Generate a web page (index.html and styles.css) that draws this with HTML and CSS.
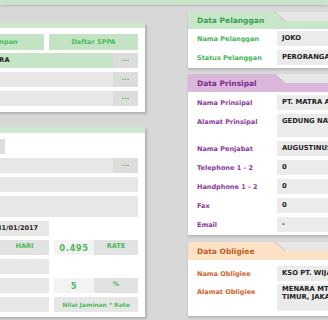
FILE: index.html
```html
<!DOCTYPE html>
<html lang="id">
<head>
    <meta charset="UTF-8">
    <meta name="viewport" content="width=device-width, initial-scale=1.0">
    <title>Data SPPA</title>
    <link rel="stylesheet" href="styles.css">
</head>
<body>
    <div class="topbar"></div>

    <div class="page">
        <div class="col-left">
            <section class="panel panel-top">
                <div class="panel-strip"></div>
                <div class="panel-body">
                    <div class="actions">
                        <button class="btn btn-save">Simpan</button>
                        <button class="btn">Daftar SPPA</button>
                    </div>
                    <div class="frow">
                        <span class="flabel">Prinsipal</span>
                        <div class="field">
                            <span class="input input-hl">PT. MATRA</span>
                            <span class="more">...</span>
                        </div>
                    </div>
                    <div class="frow">
                        <span class="flabel">Obligee</span>
                        <div class="field">
                            <span class="input"></span>
                            <span class="more">...</span>
                        </div>
                    </div>
                    <div class="frow">
                        <span class="flabel">Proyek</span>
                        <div class="field">
                            <span class="input"></span>
                            <span class="more">...</span>
                        </div>
                    </div>
                </div>
            </section>

            <section class="panel panel-main">
                <div class="panel-strip"></div>
                <div class="panel-body">
                    <div class="frow">
                        <span class="flabel">Jenis</span>
                        <div class="field">
                            <span class="select"></span>
                        </div>
                    </div>
                    <div class="frow">
                        <span class="flabel">Proyek</span>
                        <div class="field">
                            <span class="input"></span>
                            <span class="more">...</span>
                        </div>
                    </div>
                    <div class="frow">
                        <span class="flabel">No. Kontrak</span>
                        <div class="field">
                            <span class="input"></span>
                        </div>
                    </div>
                    <div class="frow">
                        <span class="flabel">Keterangan</span>
                        <div class="field">
                            <span class="input input-area"></span>
                        </div>
                    </div>
                    <div class="frow">
                        <span class="flabel">Periode</span>
                        <div class="field">
                            <span class="input w-a date">31/01/2017</span>
                        </div>
                    </div>
                    <div class="frow">
                        <span class="flabel">Jangka</span>
                        <div class="field">
                            <span class="input w-days"></span>
                            <span class="tag w-unit">HARI</span>
                            <span class="num w-b">0.495</span>
                            <span class="tag w-c">RATE</span>
                        </div>
                    </div>
                    <div class="frow">
                        <span class="flabel">Nilai Proyek</span>
                        <div class="field">
                            <span class="input w-a"></span>
                        </div>
                    </div>
                    <div class="frow">
                        <span class="flabel">Nilai Jaminan</span>
                        <div class="field">
                            <span class="input w-a"></span>
                            <span class="num w-b">5</span>
                            <span class="tag w-c">%</span>
                        </div>
                    </div>
                    <div class="frow">
                        <span class="flabel">Premi</span>
                        <div class="field">
                            <span class="input w-a"></span>
                            <span class="tag tag-small w-bc">Nilai Jaminan * Rate</span>
                        </div>
                    </div>
                </div>
            </section>
        </div>

        <div class="col-right">
            <section class="card card-green card-pelanggan">
                <div class="card-head"><span class="card-tab">Data Pelanggan</span></div>
                <div class="card-body">
                    <span class="label">Nama Pelanggan</span>
                    <span class="value">JOKO</span>
                    <span class="label">Status Pelanggan</span>
                    <span class="value">PERORANGAN</span>
                </div>
            </section>

            <section class="card card-purple">
                <div class="card-head"><span class="card-tab">Data Prinsipal</span></div>
                <div class="card-body">
                    <span class="label">Nama Prinsipal</span>
                    <span class="value">PT. MATRA ANUGERAH</span>
                    <span class="label label-top">Alamat Prinsipal</span>
                    <span class="value value-area">GEDUNG NAYAKA</span>
                    <span class="label">Nama Penjabat</span>
                    <span class="value">AUGUSTINUS</span>
                    <span class="label">Telephone 1 - 2</span>
                    <span class="value">0</span>
                    <span class="label">Handphone 1 - 2</span>
                    <span class="value">0</span>
                    <span class="label">Fax</span>
                    <span class="value">0</span>
                    <span class="label">Email</span>
                    <span class="value">-</span>
                </div>
            </section>

            <section class="card card-orange">
                <div class="card-head"><span class="card-tab">Data Obligiee</span></div>
                <div class="card-body">
                    <span class="label">Nama Obligiee</span>
                    <span class="value">KSO PT. WIJAYA</span>
                    <span class="label label-top">Alamat Obligiee</span>
                    <span class="value value-wrap">MENARA MTH JL. MT HARYONO<br>TIMUR, JAKARTA</span>
                </div>
            </section>
        </div>
    </div>
</body>
</html>
```

FILE: styles.css
```css
:root {
    --bg: #d8d8d8;
    --green-light: #c8e5c9;
    --green-btn: #c3e3c4;
    --green-text: #4cbb5b;
    --grey-input: #e8e7e5;
    --grey-btn: #dcdcdc;
    --value-bg: #ebebeb;
}

body {
    margin: 0;
    background: var(--bg);
    font-family: 'DejaVu Sans', Verdana, sans-serif;
    font-weight: bold;
    font-size: 6.5px;
    overflow: hidden;
    width: 328px;
    height: 320px;
}

.topbar {
    height: 5px;
    background: var(--green-light);
    box-shadow: 0 1px 2px rgba(0,0,0,0.15);
}

.page {
    display: flex;
    gap: 43px;
}

/* left column (cut off by the window) */
.col-left {
    flex: none;
    width: 245px;
    margin-left: -100px;
    margin-top: 18px;
}

.panel {
    background: #fff;
    box-shadow: 2px 2px 2px rgba(0,0,0,0.18);
}

.panel-top {
    margin-bottom: 15px;
}

.panel-strip {
    height: 5px;
    background: #cfe8d0;
}

.panel-main .panel-strip {
    height: 6px;
}

.panel-body {
    padding: 6px 7px;
    display: flex;
    flex-direction: column;
    gap: 4px;
}

.panel-main .panel-body {
    padding-bottom: 5px;
}

.actions {
    display: flex;
    justify-content: flex-end;
    gap: 5px;
    margin-bottom: -1px;
}

.btn {
    flex: 0 0 89px;
    height: 16px;
    border: none;
    padding: 0;
    background: var(--green-btn);
    color: var(--green-text);
    font: inherit;
}

.btn-save {
    flex-basis: 80px;
}

.frow {
    display: grid;
    grid-template-columns: 55px 1fr;
    column-gap: 5px;
}

.flabel {
    line-height: 15px;
}

.field {
    display: flex;
}

.input {
    flex: 1;
    height: 15px;
    line-height: 15px;
    padding: 0 4px;
    background: var(--grey-input);
    color: #222;
    white-space: nowrap;
    overflow: hidden;
}

.input-hl {
    background: #c6e5c7;
}

.input-area {
    height: 21px;
}

.select {
    width: 38px;
    height: 15px;
    background: #dedede;
}

.more {
    flex: 0 0 25px;
    height: 15px;
    line-height: 13px;
    text-align: center;
    background: var(--grey-btn);
    color: var(--green-text);
    font-size: 7px;
}

.w-a {
    flex: 0 0 82px;
    box-sizing: border-box;
}

.date {
    text-align: right;
    padding-right: 11px;
}

.w-days {
    flex: 0 0 28px;
    box-sizing: border-box;
}

.tag {
    height: 15px;
    line-height: 13px;
    text-align: center;
    background: #e2e2e2;
    color: var(--green-text);
}

.tag-small {
    font-size: 6px;
    line-height: 15px;
    background: #e6e6e6;
}

.w-unit {
    flex: 0 0 49px;
    margin-left: 5px;
}

.num {
    height: 15px;
    line-height: 16px;
    text-align: center;
    background: #f3f3f3;
    color: var(--green-text);
    font-size: 8.5px;
    letter-spacing: 0.5px;
}

.w-b {
    flex: 0 0 40px;
    margin-left: 5px;
}

.w-c {
    flex: 0 0 44px;
}

.w-bc {
    flex: 0 0 84px;
    margin-left: 5px;
}

/* right column */
.col-right {
    flex: none;
    width: 200px;
    margin-top: 7px;
}

.card {
    background: #fff;
    box-shadow: 0 2px 2px rgba(0,0,0,0.15);
    margin-bottom: 6px;
}

.card-purple {
    margin-bottom: 7px;
}

.card-head {
    display: flex;
    height: 18px;
    background: linear-gradient(#e6e6e6 0 9px, var(--head) 9px);
}

.card-pelanggan .card-head {
    height: 17px;
}

.card-tab {
    position: relative;
    display: flex;
    align-items: center;
    width: 78px;
    padding-left: 9px;
    background: var(--head);
    color: var(--head-text);
    font-size: 7.5px;
}

.card-tab::after {
    content: "";
    position: absolute;
    top: 0;
    right: -10px;
    width: 10px;
    height: 9px;
    background: linear-gradient(to bottom left, transparent calc(50% - 0.6px), rgba(0,0,0,0.2) 50%, var(--head) calc(50% + 0.6px));
}

.card-body {
    display: grid;
    grid-template-columns: 80px 1fr;
    row-gap: 4px;
    padding: 3px 0 3px 9px;
}

.card-pelanggan .card-body {
    padding-top: 2px;
}

.card-orange .card-body {
    padding-top: 6px;
    padding-bottom: 5px;
    row-gap: 3px;
}

.label {
    align-self: center;
    color: var(--label);
}

.label-top {
    align-self: start;
    padding-top: 4px;
}

.value {
    height: 15px;
    line-height: 15px;
    padding-left: 5px;
    background: var(--value-bg);
    color: #222;
    font-size: 6.8px;
    white-space: nowrap;
    overflow: hidden;
}

.value-area {
    height: 23px;
}

.value-wrap {
    height: 27px;
    line-height: 7.5px;
    padding-top: 2px;
    box-sizing: border-box;
}

.card-green {
    --head: #c8e6c9;
    --head-text: #3a9e4a;
    --label: #45b559;
}

.card-purple {
    --head: #dbb7db;
    --head-text: #7c2c8c;
    --label: #8d389d;
}

.card-orange {
    --head: #fde2c6;
    --head-text: #c15b24;
    --label: #cf632c;
}
```
